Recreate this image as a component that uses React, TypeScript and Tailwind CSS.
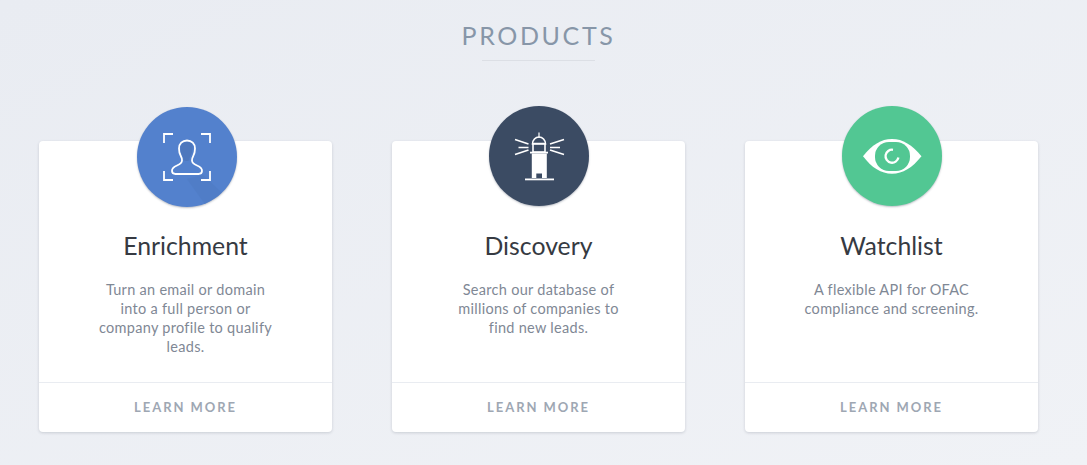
const EnrichmentIcon = () => (
  <svg width={100} height={100} viewBox="0 0 100 100" fill="none">
    <clipPath id="disc">
      <circle cx="50" cy="50" r="50" />
    </clipPath>
    <path d="M66 68 L100 100 L70 100 L50 72 Z" fill="#4d79c2" opacity="0.5" clipPath="url(#disc)" />
    <path
      d="M27 36V27H36M64 27H73V36M27 64V73H36M64 73H73V64"
      stroke="#fff"
      strokeWidth="1.8"
    />
    <path
      d="M50 33.500c-4.700 0-8 3.300-8 8 0 3 .6 5.300 1.700 7.300.9 1.700 1.400 3 1.300 4.700-.1 2.500-2 3.700-5 5-3 1.300-5.200 2.500-5 5.500.1 2 1.300 3 3.500 3h23c2.200 0 3.400-1 3.500-3 .2-3-2-4.200-5-5.500-3-1.300-4.900-2.500-5-5-.1-1.700.4-3 1.300-4.700 1.100-2 1.700-4.300 1.700-7.300 0-4.700-3.300-8-8-8Z"
      stroke="#fff"
      strokeWidth="1.8"
    />
    <path
      d="M50 35c-3.800 0-6.500 2.700-6.500 6.500 0 2.700.5 4.800 1.600 6.800 1 1.700 1.500 3.200 1.400 5 3 1 4 1 6 0-.1-1.800.4-3.300 1.400-5 1.100-2 1.600-4.100 1.600-6.800C56.500 37.700 53.800 35 50 35Z"
      fill="#4d77bd"
    />
  </svg>
);

const LighthouseIcon = () => (
  <svg width={100} height={100} viewBox="0 0 100 100" fill="none">
    <path d="M50 26.500V32" stroke="#fff" strokeWidth="1.200" />
    <path d="M43.500 38C43.500 34 46.500 31 50 31C53.500 31 56.500 34 56.500 38Z" stroke="#fff" strokeWidth="1.600" />
    <path d="M44 37.500H56V46H44Z" stroke="#fff" strokeWidth="1.600" />
    <path d="M41 46.600H59" stroke="#fff" strokeWidth="1.800" />
    <path d="M42.800 47.500H57.800V72H53V67.500H47.300V72H42.800Z" fill="#fff" />
    <path d="M36 73.400H65" stroke="#fff" strokeWidth="1.800" />
    <path
      d="M26 33.500L39.500 38M29.500 41.500H39.500M26 48.500L39.500 44M75 33.500L61 38M71 41.500H61M75 48.500L61 44"
      stroke="#fff"
      strokeWidth="1.600"
    />
  </svg>
);

const EyeIcon = () => (
  <svg width={100} height={100} viewBox="0 0 100 100" fill="none">
    <path d="M21 50.300C30 39 39 33 50 33C61 33 70 39 79.500 50.300C70 62 61 67.700 50 67.700C39 67.700 30 62 21 50.300Z" fill="#fff" />
    <rect x="33" y="36" width="35" height="29" rx="14" ry="14" fill="#52c793" />
    <path d="M56.400 51.500A6.500 6.500 0 1 1 51 43.800" stroke="#fff" strokeWidth="2.300" />
  </svg>
);

const products = [
  {
    name: "Enrichment",
    text: "Turn an email or domain into a full person or company profile to qualify leads.",
    color: "bg-[#5381cd] ml-[98px] -mt-[34px]",
    icon: <EnrichmentIcon />,
  },
  {
    name: "Discovery",
    text: "Search our database of millions of companies to find new leads.",
    color: "bg-[#3b4b63] ml-[97px] -mt-[35px] mb-[1px]",
    icon: <LighthouseIcon />,
  },
  {
    name: "Watchlist",
    text: "A flexible API for OFAC compliance and screening.",
    color: "bg-[#52c793] ml-[97px] -mt-[35px] mb-[1px]",
    icon: <EyeIcon />,
  },
];

export default function App() {
  return (
    <div className="h-[465px] w-[1087px] overflow-hidden bg-gradient-to-br from-[#e9ecf2] to-[#f0f2f6] font-['Lato',sans-serif]">
      <div className="w-[1077px]">
        <div className="flex flex-col items-center pt-[20px]">
          <h1 className="text-[25px] leading-[30px] font-normal tracking-[0.105em] text-[#8796a8]">PRODUCTS</h1>
          <div className="mt-[10px] h-px w-[113px] bg-[#dcdfe5]"></div>
        </div>
        <div className="mt-[80px] flex justify-center gap-[60px]">
          {products.map((p) => (
            <div key={p.name} className="flex h-[291px] w-[293px] flex-col rounded-[4px] bg-white shadow-[0_1px_3px_rgba(60,70,90,0.2)]">
              <div className={`h-[100px] w-[100px] rounded-full shadow-[0_1px_2px_rgba(60,70,90,0.35)] ${p.color}`}>
                {p.icon}
              </div>
              <h2 className="mt-[22px] text-center text-[24.8px] leading-[34px] text-[#363a42]">{p.name}</h2>
              <p className="mx-auto mt-[17px] w-[176px] flex-1 text-center text-[14.5px] leading-[19px] tracking-[0.02em] text-[#7f8895]">{p.text}</p>
              <div className="flex h-[50px] items-center justify-center border-t border-[#e9ecf1] text-[13px] font-bold tracking-[0.15em] text-[#9ea7b3]">
                LEARN MORE
              </div>
            </div>
          ))}
        </div>
      </div>
    </div>
  );
}
